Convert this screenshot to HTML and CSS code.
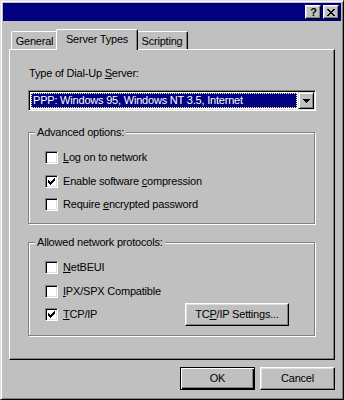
FILE: index.html
```html
<!DOCTYPE html>
<html>
<head>
<meta charset="utf-8">
<link rel="stylesheet" href="styles.css">
</head>
<body>
<div class="window">
  <div class="titlebar">
    <div class="caption-buttons">
      <span class="cap-btn help">?</span>
      <span class="cap-btn">
        <svg width="8" height="7" viewBox="0 0 8 7" shape-rendering="crispEdges"><path d="M0 0h2v1h-2z M6 0h2v1h-2z M1 1h2v1h-2z M5 1h2v1h-2z M2 2h4v1h-4z M3 3h2v1h-2z M2 4h4v1h-4z M1 5h2v1h-2z M5 5h2v1h-2z M0 6h2v1h-2z M6 6h2v1h-2z" fill="#000"/></svg>
      </span>
    </div>
  </div>
  <div class="content">
    <div class="tabs">
      <div class="tab tab-general">General</div>
      <div class="tab tab-active">Server Types</div>
      <div class="tab tab-scripting">Scripting</div>
    </div>
    <div class="panel">
      <div class="field-label">Type of Dial-Up <u>S</u>erver:</div>
      <div class="combo">
        <div class="combo-value"><span class="combo-sel">PPP: Windows 95, Windows NT 3.5, Internet</span></div>
        <div class="combo-btn">
          <svg width="7" height="4" viewBox="0 0 7 4" shape-rendering="crispEdges"><path d="M0 0h7v1h-7z M1 1h5v1h-5z M2 2h3v1h-3z M3 3h1v1h-1z" fill="#000"/></svg>
        </div>
      </div>

      <div class="group group-advanced">
        <div class="legend">Advanced options:</div>
        <div class="rows">
          <div class="row">
            <span class="checkbox"></span>
            <span class="check-text"><u>L</u>og on to network</span>
          </div>
          <div class="row">
            <span class="checkbox"><svg width="7" height="7" viewBox="0 0 7 7" shape-rendering="crispEdges"><path d="M6 0h1v1h-1z M5 1h2v1h-2z M0 2h1v1h-1z M4 2h3v1h-3z M0 3h2v1h-2z M3 3h3v1h-3z M0 4h5v1h-5z M1 5h3v1h-3z M2 6h1v1h-1z" fill="#000"/></svg></span>
            <span class="check-text">Enable software <u>c</u>ompression</span>
          </div>
          <div class="row">
            <span class="checkbox"></span>
            <span class="check-text">Require <u>e</u>ncrypted password</span>
          </div>
        </div>
      </div>

      <div class="group group-protocols">
        <div class="legend">Allowed network protocols:</div>
        <div class="rows">
          <div class="row">
            <span class="checkbox"></span>
            <span class="check-text"><u>N</u>etBEUI</span>
          </div>
          <div class="row">
            <span class="checkbox"></span>
            <span class="check-text"><u>I</u>PX/SPX Compatible</span>
          </div>
          <div class="row row-button">
            <span class="checkbox"><svg width="7" height="7" viewBox="0 0 7 7" shape-rendering="crispEdges"><path d="M6 0h1v1h-1z M5 1h2v1h-2z M0 2h1v1h-1z M4 2h3v1h-3z M0 3h2v1h-2z M3 3h3v1h-3z M0 4h5v1h-5z M1 5h3v1h-3z M2 6h1v1h-1z" fill="#000"/></svg></span>
            <span class="check-text"><u>T</u>CP/IP</span>
            <span class="btn btn-settings">TC<u>P</u>/IP Settings...</span>
          </div>
        </div>
      </div>
    </div>
    <div class="dialog-buttons">
      <span class="btn btn-default">OK</span>
      <span class="btn">Cancel</span>
    </div>
  </div>
</div>
</body>
</html>
```

FILE: styles.css
```css
* {
  box-sizing: border-box;
}

html, body {
  margin: 0;
  padding: 0;
  background: #c0c0c0;
}

body {
  font-family: "Liberation Sans", Arial, sans-serif;
  font-size: 11px;
  letter-spacing: -0.2px;
  line-height: 13px;
  color: #000;
}

u {
  text-decoration: underline;
  text-underline-offset: 1px;
}

.window {
  width: 344px;
  height: 400px;
  background: #c0c0c0;
  border: 1px solid;
  border-color: #dfdfdf #000 #000 #dfdfdf;
  box-shadow: inset 1px 1px #fff, inset -1px -1px #808080;
  padding: 2px;
}

.titlebar {
  height: 18px;
  background: #000080;
  display: flex;
  align-items: center;
  justify-content: flex-end;
  padding-right: 2px;
}

.caption-buttons {
  display: flex;
  gap: 2px;
}

.cap-btn {
  width: 16px;
  height: 14px;
  background: #c0c0c0;
  border: 1px solid;
  border-color: #fff #000 #000 #fff;
  box-shadow: inset -1px -1px #808080, inset 1px 1px #dfdfdf;
  display: flex;
  align-items: center;
  justify-content: center;
}

.cap-btn.help {
  font-weight: bold;
  font-size: 11px;
  line-height: 12px;
  letter-spacing: 0;
  padding-left: 1px;
}

.content {
  padding: 8px 6px 0 6px;
}

.tabs {
  display: flex;
  align-items: flex-end;
  padding-left: 2px;
  height: 20px;
}

.tab {
  height: 18px;
  background: #c0c0c0;
  border-top: 1px solid #fff;
  border-left: 1px solid #fff;
  border-right: 1px solid #000;
  border-radius: 2px 2px 0 0;
  box-shadow: inset -1px 0 #808080;
  padding-top: 3px;
  text-align: center;
}

.tab-general {
  width: 47px;
}

.tab-active {
  width: 82px;
  height: 21px;
  margin: 0 -2px -1px -2px;
  position: relative;
  z-index: 1;
  padding-top: 3px;
}

.tab-scripting {
  width: 52px;
}

.panel {
  height: 311px;
  border: 1px solid;
  border-color: #fff #000 #000 #fff;
  box-shadow: inset -1px -1px #808080;
  padding: 17px 18px 0 18px;
}

.field-label {
  margin-left: 1px;
}

.combo {
  margin-top: 10px;
  height: 21px;
  width: 288px;
  background: #fff;
  border: 1px solid;
  border-color: #808080 #fff #fff #808080;
  box-shadow: inset 1px 1px #000, inset -1px -1px #dfdfdf;
  padding: 1px;
  display: flex;
}

.combo-value {
  flex: 1;
  padding: 1px 1px 1px 1px;
}

.combo-sel {
  display: block;
  height: 15px;
  background: #000080;
  color: #fff;
  border: 1px dotted #ffff80;
  padding-left: 1px;
  line-height: 13px;
  white-space: nowrap;
}

.combo-btn {
  width: 16px;
  height: 17px;
  background: #c0c0c0;
  border: 1px solid;
  border-color: #dfdfdf #000 #000 #dfdfdf;
  box-shadow: inset 1px 1px #fff, inset -1px -1px #808080;
  display: flex;
  align-items: center;
  justify-content: center;
}

.group {
  width: 287px;
  border: 1px solid #808080;
  box-shadow: inset 1px 1px #fff, 1px 1px #fff;
}

.group-advanced {
  margin-top: 21px;
  height: 92px;
}

.group-protocols {
  margin-top: 18px;
  height: 94px;
}

.legend {
  display: table;
  margin: -7px 0 0 6px;
  padding: 0 2px 0 2px;
  background: #c0c0c0;
}

.rows {
  padding: 12px 0 0 16px;
  display: flex;
  flex-direction: column;
  gap: 11px;
}

.row {
  display: flex;
  align-items: center;
  height: 13px;
}

.row:last-child {
  margin-top: -1px;
}

.row-button {
  position: relative;
}

.checkbox {
  width: 13px;
  height: 13px;
  flex: none;
  background: #fff;
  border: 1px solid;
  border-color: #808080 #fff #fff #808080;
  box-shadow: inset 1px 1px #000, inset -1px -1px #dfdfdf;
  display: flex;
  align-items: center;
  justify-content: center;
}

.check-text {
  margin-left: 5px;
  white-space: nowrap;
}

.btn {
  display: flex;
  align-items: center;
  justify-content: center;
  width: 75px;
  height: 23px;
  background: #c0c0c0;
  border: 1px solid;
  border-color: #fff #000 #000 #fff;
  box-shadow: inset -1px -1px #808080, inset 1px 1px #dfdfdf;
}

.btn-settings {
  width: 104px;
  margin-left: auto;
  margin-right: 25px;
  margin-top: -1px;
}

.dialog-buttons {
  margin-top: 7px;
  display: flex;
  justify-content: flex-end;
  gap: 5px;
}

.btn-default {
  border-color: #000;
  box-shadow: inset 1px 1px #fff, inset -1px -1px #000, inset -2px -2px #808080;
}
```
